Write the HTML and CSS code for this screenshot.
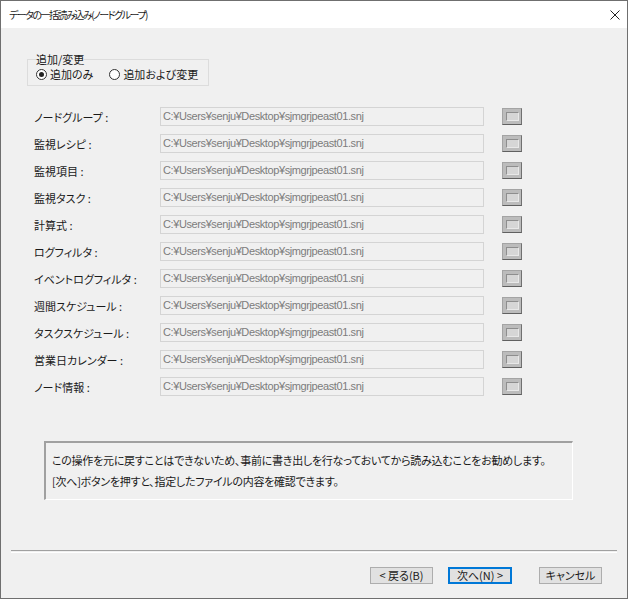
FILE: index.html
```html
<!DOCTYPE html>
<html lang="ja">
<head>
<meta charset="utf-8">
<title>データの一括読み込み(ノードグループ)</title>
<link rel="stylesheet" href="styles.css">
</head>
<body>
<div class="window">
  <div class="titlebar">
    <span class="title">データの一括読み込み(ノードグループ)</span>
    <svg class="close" width="10" height="10" viewBox="0 0 10 10"><path d="M0.5 0.5 L9.5 9.5 M9.5 0.5 L0.5 9.5" stroke="#222" stroke-width="1" fill="none"/></svg>
  </div>
  <div class="content">
    <fieldset class="mode">
      <legend>追加/変更</legend>
      <div class="radios">
        <label class="radio"><span class="dot checked"></span>追加のみ</label>
        <label class="radio"><span class="dot"></span>追加および変更</label>
      </div>
    </fieldset>
    <div class="rows">
      <div class="row"><span class="lbl">ノードグループ :</span><div class="path">C:¥Users¥senju¥Desktop¥sjmgrjpeast01.snj</div><span class="browse"><span class="face"></span></span></div>
      <div class="row"><span class="lbl">監視レシピ :</span><div class="path">C:¥Users¥senju¥Desktop¥sjmgrjpeast01.snj</div><span class="browse"><span class="face"></span></span></div>
      <div class="row"><span class="lbl">監視項目 :</span><div class="path">C:¥Users¥senju¥Desktop¥sjmgrjpeast01.snj</div><span class="browse"><span class="face"></span></span></div>
      <div class="row"><span class="lbl">監視タスク :</span><div class="path">C:¥Users¥senju¥Desktop¥sjmgrjpeast01.snj</div><span class="browse"><span class="face"></span></span></div>
      <div class="row"><span class="lbl">計算式 :</span><div class="path">C:¥Users¥senju¥Desktop¥sjmgrjpeast01.snj</div><span class="browse"><span class="face"></span></span></div>
      <div class="row"><span class="lbl">ログフィルタ :</span><div class="path">C:¥Users¥senju¥Desktop¥sjmgrjpeast01.snj</div><span class="browse"><span class="face"></span></span></div>
      <div class="row"><span class="lbl">イベントログフィルタ :</span><div class="path">C:¥Users¥senju¥Desktop¥sjmgrjpeast01.snj</div><span class="browse"><span class="face"></span></span></div>
      <div class="row"><span class="lbl">週間スケジュール :</span><div class="path">C:¥Users¥senju¥Desktop¥sjmgrjpeast01.snj</div><span class="browse"><span class="face"></span></span></div>
      <div class="row"><span class="lbl">タスクスケジュール :</span><div class="path">C:¥Users¥senju¥Desktop¥sjmgrjpeast01.snj</div><span class="browse"><span class="face"></span></span></div>
      <div class="row"><span class="lbl">営業日カレンダー :</span><div class="path">C:¥Users¥senju¥Desktop¥sjmgrjpeast01.snj</div><span class="browse"><span class="face"></span></span></div>
      <div class="row"><span class="lbl">ノード情報 :</span><div class="path">C:¥Users¥senju¥Desktop¥sjmgrjpeast01.snj</div><span class="browse"><span class="face"></span></span></div>
    </div>
    <div class="note">
      <p>この操作を元に戻すことはできないため、事前に書き出しを行なっておいてから読み込むことをお勧めします。</p>
      <p>[次へ]ボタンを押すと、指定したファイルの内容を確認できます。</p>
    </div>
    <div class="sep"></div>
    <div class="buttons">
      <button class="btn back">&lt; 戻る(B)</button>
      <button class="btn next">次へ(N) &gt;</button>
      <button class="btn cancel">キャンセル</button>
    </div>
  </div>
</div>
</body>
</html>
```

FILE: styles.css
```css
html, body {
  margin: 0;
  padding: 0;
  background: #ffffff;
}

body {
  font-family: "Noto Sans CJK JP", "Noto Sans", sans-serif;
  font-size: 11px;
  color: #1a1a1a;
  font-feature-settings: "palt";
}

.window {
  width: 628px;
  height: 599px;
  box-sizing: border-box;
  border: 1px solid #6f6f6f;
  display: flex;
  flex-direction: column;
  background: #f0f0f0;
}

.titlebar {
  height: 27px;
  flex: none;
  background: #ffffff;
  display: flex;
  align-items: center;
  justify-content: space-between;
  padding: 0 7px 0 8px;
}

.title {
  font-size: 10px;
  line-height: 14px;
  letter-spacing: -1.5px;
  color: #1a1a1a;
  white-space: nowrap;
}

.close {
  display: block;
}

.content {
  flex: 1;
  display: flex;
  flex-direction: column;
}

.mode {
  margin: 24px 0 0 26px;
  width: 182px;
  box-sizing: border-box;
  border: 1px solid #dcdcdc;
  padding: 1px 8px 4px 8px;
}

.mode legend {
  padding: 0;
  font-size: 11px;
  line-height: 14px;
}

.radios {
  display: flex;
  height: 14px;
  align-items: center;
}

.radio {
  display: flex;
  align-items: center;
  line-height: 14px;
  font-size: 11px;
  white-space: nowrap;
  flex: none;
}

.radio + .radio {
  margin-left: 16px;
}

.dot {
  width: 11px;
  height: 11px;
  flex: none;
  box-sizing: border-box;
  border: 1px solid #333;
  border-radius: 50%;
  background: #fff;
  margin-right: 3px;
  display: flex;
  align-items: center;
  justify-content: center;
}

.dot.checked::after {
  content: "";
  width: 5px;
  height: 5px;
  border-radius: 50%;
  background: #222;
}

.rows {
  margin: 21px 0 0 33px;
  display: flex;
  flex-direction: column;
  gap: 8px;
}

.row {
  display: flex;
  align-items: center;
  height: 19px;
}

.lbl {
  width: 126px;
  flex: none;
  font-size: 11px;
  line-height: 14px;
  white-space: nowrap;
}

.path {
  width: 324px;
  height: 19px;
  box-sizing: border-box;
  border: 1px solid #d4d4d4;
  background: #f0f0f0;
  color: #7c7c7c;
  font-family: "Liberation Sans", Arial, sans-serif;
  font-size: 11px;
  letter-spacing: -0.4px;
  line-height: 17px;
  padding-left: 2px;
  white-space: nowrap;
  overflow: hidden;
}

.browse {
  margin-left: 18px;
  width: 20px;
  height: 17px;
  box-sizing: border-box;
  border: 1px solid #a4a4a4;
  border-right-color: #707070;
  border-bottom-color: #606060;
  background: #bcbcbc;
  display: flex;
  align-items: center;
  justify-content: center;
}

.browse .face {
  width: 13px;
  height: 9px;
  box-sizing: border-box;
  border: 1px solid #8e8e8e;
  border-right-color: #e8e8e8;
  border-bottom-color: #e8e8e8;
  background: #d6d6d6;
}

.note {
  margin: 45px 0 0 43px;
  width: 529px;
  height: 59px;
  box-sizing: border-box;
  border-top: 2px solid #a0a0a0;
  border-left: 2px solid #a0a0a0;
  border-right: 1px solid #ffffff;
  border-bottom: 1px solid #ffffff;
  padding: 7px 0 0 6px;
}

.note p {
  margin: 0;
  line-height: 21px;
  font-size: 11px;
  letter-spacing: -0.25px;
  white-space: nowrap;
}

.sep {
  margin: 50px 0 0 10px;
  width: 606px;
  height: 1px;
  border-top: 1px solid #a0a0a0;
  border-bottom: 1px solid #ffffff;
}

.buttons {
  margin-top: 14px;
  display: flex;
  justify-content: flex-end;
  padding-right: 25px;
}

.btn {
  height: 17px;
  width: 63px;
  box-sizing: border-box;
  border: 1px solid #adadad;
  background: #e1e1e1;
  font-family: "Noto Sans CJK JP", "Noto Sans", sans-serif;
  font-feature-settings: "palt";
  font-size: 11px;
  line-height: 13px;
  color: #1a1a1a;
  padding: 0;
  margin: 0;
}

.btn.next {
  margin-left: 15px;
  width: 64px;
  border: 1px solid #0078d7;
  box-shadow: inset 0 0 0 1px #0078d7;
}

.btn.cancel {
  margin-left: 27px;
}
```
